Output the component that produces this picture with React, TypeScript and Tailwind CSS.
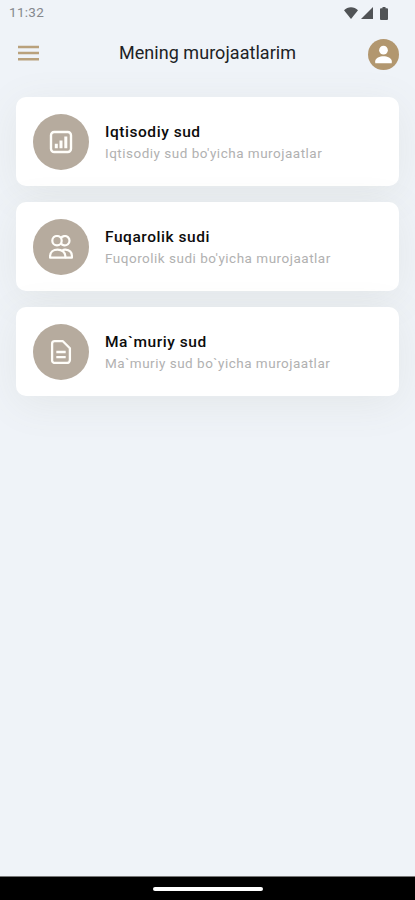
import type { ReactNode } from 'react';

type Murojaat = {
  id: string;
  nomi: string;
  izoh: string;
  icon: ReactNode;
};

// Ikonkalar
const ChartIcon = () => (
  <svg viewBox="0 0 24 24" className="w-6 h-6" fill="none" stroke="#fffefa" strokeWidth="2.4">
    <rect x="2" y="2" width="20" height="20" rx="3.2" />
    <path d="M7.3 18.200v-4.500M12 18.200v-7.700M16.800 18.200V6.500" strokeWidth="3" />
  </svg>
);

const PeopleIcon = () => (
  <svg viewBox="0 0 24 24" className="w-6 h-6" fill="none" stroke="#fffefa" strokeWidth="2.2" strokeLinejoin="round">
    <circle cx="8" cy="5.700" r="4.700" />
    <path d="M11.900 3.100a4.700 4.700 0 1 1 0 5.200" />
    <path d="M1.100 22.700v-1.500c0-4 3.200-6.600 7.500-6.600s7.700 2.600 7.700 6.600v1.500z" />
    <path d="M13.500 15.200c1-.5 2-.6 3-.5 3.800.3 6.400 2.800 6.400 6.500v1.500h-6.500" />
  </svg>
);

const FileIcon = () => (
  <svg viewBox="0 0 24 24" className="w-6 h-6" fill="none" stroke="#fffefa" strokeWidth="2.3" strokeLinejoin="round">
    <path d="M5.700 1.200h8.200L20.900 8.200V20a3 3 0 0 1-3 3H5.700a2.600 2.600 0 0 1-2.600-2.600V3.800a2.600 2.600 0 0 1 2.600-2.600z" />
    <path d="M7.300 12h9.400M7.300 17.200h9.400" />
  </svg>
);

const murojaatlar: Murojaat[] = [
  { id: 'iqtisodiy', nomi: 'Iqtisodiy sud', izoh: "Iqtisodiy sud bo'yicha murojaatlar", icon: <ChartIcon /> },
  { id: 'fuqarolik', nomi: 'Fuqarolik sudi', izoh: "Fuqorolik sudi bo'yicha murojaatlar", icon: <PeopleIcon /> },
  { id: 'mamuriy', nomi: 'Ma`muriy sud', izoh: 'Ma`muriy sud bo`yicha murojaatlar', icon: <FileIcon /> },
];

function StatusBar() {
  return (
    <div className="h-[26px] pl-[9px] pr-[27px] flex items-center justify-between">
      <span className="text-[13.5px] leading-5 pb-0.5 text-[#85888d] tracking-[0.3px]">11:32</span>
      <div className="flex items-center text-[#505356]">
        <svg viewBox="0 0 14 12" className="w-3.5 h-3" fill="currentColor">
          <path d="M7 12 0 3.200C2 1.200 4.400.2 7 .2s5 1 7 3z" />
        </svg>
        <svg viewBox="0 0 12 12" className="w-3 h-3 ml-[3px]" fill="currentColor">
          <path d="M12 0v12H0z" />
        </svg>
        <svg viewBox="0 0 8 13" className="w-2 h-[13px] ml-[7px]" fill="currentColor">
          <path d="M2.500 0h3v1.300H7a1 1 0 0 1 1 1V12a1 1 0 0 1-1 1H1a1 1 0 0 1-1-1V2.300a1 1 0 0 1 1-1h1.500z" />
        </svg>
      </div>
    </div>
  );
}

function Header() {
  return (
    <header className="h-[56px] pl-[18px] pr-4 flex items-center justify-between">
      <button aria-label="Menyu" className="w-[29px] pb-[2px]">
        <svg viewBox="0 0 21 16" className="w-[21px] h-4" stroke="#b9a17c" strokeWidth="2.4">
          <path d="M0 2h21M0 8h21M0 14.200h21" />
        </svg>
      </button>
      <h1 className="text-[18px] text-[#202225] tracking-[0.05px] pb-[3px]">Mening murojaatlarim</h1>
      <button aria-label="Profil">
        <svg viewBox="0 0 30 30" className="w-[31px] h-[31px]">
          <circle cx="15" cy="15" r="15" fill="#b2976f" />
          <circle cx="15" cy="10.800" r="4.200" fill="white" />
          <path d="M7 23.500v-2c0-3 4.500-4.800 8-4.800s8 1.800 8 4.800v2z" fill="white" />
        </svg>
      </button>
    </header>
  );
}

export default function MurojaatlarSahifasi() {
  return (
    <div className="h-[900px] w-full flex flex-col bg-[#eff3f8] font-['Roboto',sans-serif] overflow-hidden">
      <StatusBar />
      <Header />

      <main className="flex-1 px-4 pt-[15px] flex flex-col gap-4">
        {murojaatlar.map((m) => (
          <div
            key={m.id}
            className="h-[89px] shrink-0 px-[17px] flex items-center gap-4 bg-white rounded-[10px] shadow-[0_8px_40px_rgba(120,120,90,0.09)]"
          >
            <div className="w-14 h-14 rounded-full bg-[#b6ab9e] flex items-center justify-center">{m.icon}</div>
            <div>
              <h2 className="text-[15.5px] leading-5 font-medium text-[#0c0c0c] tracking-[0.55px]">{m.nomi}</h2>
              <p className="text-[13.5px] leading-4 mt-[3px] mb-px text-[#b1b1b1] tracking-[0.5px]">{m.izoh}</p>
            </div>
          </div>
        ))}
      </main>

      {/* Pastki navigatsiya paneli */}
      <div className="h-6 shrink-0 bg-black border-t border-[#777] flex items-center justify-center">
        <div className="w-[110px] h-1 rounded-full bg-white" />
      </div>
    </div>
  );
}
